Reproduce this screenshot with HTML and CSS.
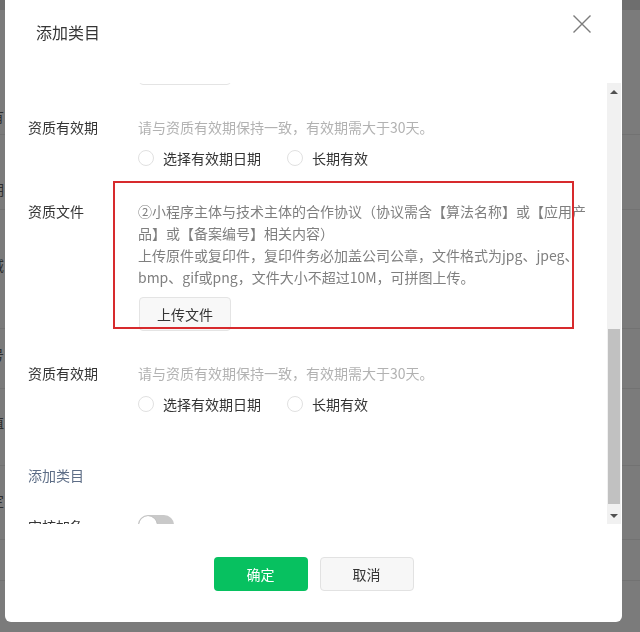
FILE: index.html
```html
<!DOCTYPE html>
<html lang="zh-CN">
<head>
<meta charset="utf-8">
<title>添加类目</title>
<link rel="stylesheet" href="styles.css">
</head>
<body>
<div class="backdrop">
  <div class="bg-top"></div>
  <div class="bg-row r1"><span class="bg-text t1">有</span></div>
  <div class="bg-row r2"><span class="bg-text t2">期</span></div>
  <div class="bg-row r3"><span class="bg-text t3">域</span></div>
  <div class="bg-row r4"><span class="bg-text t4">号</span></div>
  <div class="bg-row r5"><span class="bg-text t5">值</span></div>
  <div class="bg-row r6"><span class="bg-text t6">定</span></div>
  <div class="bg-row r7"></div>
</div>

<div class="dialog">
  <div class="dialog-head">
    <div class="dialog-title">添加类目</div>
    <svg class="close" width="20" height="20" viewBox="0 0 20 20">
      <path d="M1.5 1.5 L18.5 18.5 M18.5 1.5 L1.5 18.5" stroke="#7c7c7c" stroke-width="1.4" fill="none"/>
    </svg>
  </div>

  <div class="dialog-body">
    <div class="scroll-content">
      <div class="form-row prev-row">
        <div class="label"></div>
        <div class="field"><span class="btn-upload">上传文件</span></div>
      </div>

      <div class="form-row">
        <div class="label">资质有效期</div>
        <div class="field">
          <div class="hint">请与资质有效期保持一致，有效期需大于30天。</div>
          <div class="radios">
            <span class="radio"><i class="circle"></i>选择有效期日期</span>
            <span class="radio"><i class="circle"></i>长期有效</span>
          </div>
        </div>
      </div>

      <div class="form-row file-row">
        <div class="label">资质文件</div>
        <div class="field">
          <div class="desc">②小程序主体与技术主体的合作协议（协议需含【算法名称】或【应用产<br>品】或【备案编号】相关内容）<br>上传原件或复印件，复印件务必加盖公司公章，文件格式为jpg、jpeg、<br>bmp、gif或png，文件大小不超过10M，可拼图上传。</div>
          <span class="btn-upload">上传文件</span>
        </div>
        <div class="mark"></div>
      </div>

      <div class="form-row">
        <div class="label">资质有效期</div>
        <div class="field">
          <div class="hint">请与资质有效期保持一致，有效期需大于30天。</div>
          <div class="radios">
            <span class="radio"><i class="circle"></i>选择有效期日期</span>
            <span class="radio"><i class="circle"></i>长期有效</span>
          </div>
        </div>
      </div>

      <div class="add-link">添加类目</div>

      <div class="form-row urgent-row">
        <div class="label">审核加急</div>
        <div class="field"><span class="switch"><i class="knob"></i></span></div>
      </div>
    </div>

    <div class="scrollbar">
      <div class="sb-btn"><i class="tri-up"></i></div>
      <div class="sb-track"><div class="sb-thumb"></div></div>
      <div class="sb-btn"><i class="tri-down"></i></div>
    </div>
  </div>

  <div class="dialog-foot">
    <span class="btn btn-primary">确定</span>
    <span class="btn btn-default">取消</span>
  </div>
</div>
</body>
</html>
```
FILE: styles.css
```css
* { box-sizing: border-box; }

html, body {
  margin: 0;
  padding: 0;
  width: 640px;
  height: 632px;
  overflow: hidden;
  background: #7b7b7b;
  font-family: "Noto Sans CJK SC", "Noto Sans", sans-serif;
  font-size: 14px;
}

.backdrop { display: flex; flex-direction: column; }
.bg-top { height: 10px; background: #6e6e6e; }
.bg-row { border-bottom: 1px solid #727272; display: flex; align-items: flex-start; }
.r1 { height: 125px; }
.r2 { height: 75px; }
.r3 { height: 119px; }
.r4 { height: 60px; }
.r5 { height: 77px; }
.r6 { height: 74px; }
.r7 { height: 41px; }

.bg-text {
  margin-left: -10px;
  font-size: 14px;
  line-height: 16px;
  color: #2e2e2e;
}
.t1 { margin-top: 98px; }
.t2 { margin-top: 46px; }
.t3 { margin-top: 47px; }
.t4 { margin-top: 17px; }
.t5 { margin-top: 25px; }
.t6 { margin-top: 26px; }

.dialog {
  position: fixed;
  left: 5px;
  top: 0;
  width: 617px;
  height: 622px;
  background: #fff;
  border-radius: 0 0 6px 6px;
  display: flex;
  flex-direction: column;
  overflow: hidden;
}

.dialog-head {
  height: 83px;
  flex: none;
  display: flex;
  justify-content: space-between;
  align-items: flex-start;
  padding: 21px 31px 0 31px;
}
.dialog-title {
  font-size: 16px;
  line-height: 22px;
  color: #353535;
}
.close { margin-top: -7px; margin-right: -1px; }

.dialog-body {
  height: 441px;
  flex: none;
  display: flex;
  overflow: hidden;
}

.scroll-content {
  flex: 1;
  overflow: hidden;
  padding-left: 23px;
  display: flex;
  flex-direction: column;
  gap: 31px;
}

.form-row {
  display: grid;
  grid-template-columns: 110px 1fr;
  position: relative;
  flex: none;
}
.prev-row { margin-top: -32px; }

.label {
  line-height: 22px;
  color: #353535;
}
.field { display: flex; flex-direction: column; align-items: flex-start; }

.hint {
  line-height: 22px;
  color: #b2b2b2;
}

.radios {
  margin-top: 8px;
  height: 23px;
  display: flex;
  align-items: center;
  gap: 26px;
  color: #353535;
}
.radio { display: inline-flex; align-items: center; gap: 9px; line-height: 22px; }
.circle {
  width: 16px;
  height: 16px;
  border: 1px solid #e1e1e1;
  border-radius: 50%;
  display: block;
}

.desc {
  line-height: 22px;
  color: #7f7f7f;
  white-space: nowrap;
}

.btn-upload {
  display: inline-flex;
  align-items: center;
  justify-content: center;
  width: 92px;
  height: 34px;
  margin-left: 1px;
  border: 1px solid #e4e4e4;
  border-radius: 4px;
  background: #f8f8f8;
  color: #353535;
}
.prev-row .btn-upload { background: #fff; }
.file-row .btn-upload { margin-top: 9px; }

.mark {
  position: absolute;
  left: 85px;
  top: -19px;
  width: 461px;
  height: 148px;
  border: 2px solid #d72a2d;
  pointer-events: none;
}

.add-link {
  margin-top: 18px;
  line-height: 22px;
  color: #5d6d86;
  flex: none;
}

.urgent-row { margin-top: -2px; }
.switch {
  display: block;
  width: 36px;
  height: 20px;
  border-radius: 10px;
  background: #c9c9c9;
  position: relative;
}
.knob {
  position: absolute;
  left: 1px;
  top: 1px;
  width: 18px;
  height: 18px;
  border-radius: 50%;
  background: #fff;
  box-shadow: 0 0 1px rgba(0,0,0,0.25);
}

.scrollbar {
  width: 14px;
  margin-right: 1px;
  background: #f1f1f1;
  display: flex;
  flex-direction: column;
  flex: none;
}
.sb-btn {
  height: 17px;
  display: flex;
  align-items: center;
  justify-content: center;
  flex: none;
}
.tri-up, .tri-down {
  display: block;
  width: 0;
  height: 0;
  border-left: 4px solid transparent;
  border-right: 4px solid transparent;
}
.tri-up { border-bottom: 4px solid #505050; }
.tri-down { border-top: 4px solid #505050; }
.sb-track { flex: 1; padding: 229px 1px 0 1px; }
.sb-thumb { height: 175px; background: #c1c1c1; }

.dialog-foot {
  flex: none;
  display: flex;
  justify-content: center;
  gap: 12px;
  padding-top: 33px;
}
.btn {
  width: 94px;
  height: 34px;
  border-radius: 4px;
  display: inline-flex;
  align-items: center;
  justify-content: center;
  font-size: 14px;
}
.btn-primary { background: #07c160; color: #fff; }
.btn-default { background: #f7f7f7; border: 1px solid #e2e2e2; color: #353535; }
```
